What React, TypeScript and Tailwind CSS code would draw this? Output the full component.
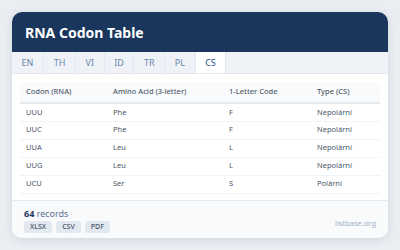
const tabs = ["EN", "TH", "VI", "ID", "TR", "PL", "CS"];

const rows = [
  { codon: "UUU", amino: "Phe", letter: "F", type: "Nepolární" },
  { codon: "UUC", amino: "Phe", letter: "F", type: "Nepolární" },
  { codon: "UUA", amino: "Leu", letter: "L", type: "Nepolární" },
  { codon: "UUG", amino: "Leu", letter: "L", type: "Nepolární" },
  { codon: "UCU", amino: "Ser", letter: "S", type: "Polární" },
];

export default function App() {
  return (
    <div
      className="h-[250px] w-[400px] bg-[#eaeef3] p-[12px]"
      style={{ fontFamily: '"Noto Sans", "Open Sans", sans-serif' }}
    >
      <div className="flex h-[226px] flex-col overflow-hidden rounded-[10px] bg-white shadow-[0_2px_8px_rgba(30,41,59,0.12)]">
        <div className="flex h-[40px] items-center bg-[#1b365d] px-[13px]">
          <h1 className="text-[14px] font-bold text-white">RNA Codon Table</h1>
        </div>

        <div className="flex h-[22px] border-b border-[#e2e8f0] bg-[#eff3f8]">
          {tabs.map((tab) => (
            <div
              key={tab}
              className={
                tab === "CS"
                  ? "flex items-center justify-center border-r border-[#e2e8f0] bg-white px-[9.6px] text-[9px] text-[#1e4e8c]"
                  : "flex items-center justify-center border-r border-[#e2e8f0] px-[9.6px] text-[9px] text-[#6b86a8]"
              }
            >
              {tab}
            </div>
          ))}
        </div>

        <div className="flex-1 px-[8px] pt-[8px]">
          <table className="w-full border-collapse text-left text-[7.5px] text-[#4a5568]">
            <thead>
              <tr className="h-[21px] border-b-2 border-[#e5eaf1] bg-[#f8fafc] text-[#555f6d]">
                <th className="w-[87px] pl-[6px] font-medium">Codon (RNA)</th>
                <th className="w-[116px] pl-[6px] font-medium">Amino Acid (3-letter)</th>
                <th className="w-[88px] pl-[6px] font-medium">1-Letter Code</th>
                <th className="pl-[6px] font-medium">Type (CS)</th>
              </tr>
            </thead>
            <tbody>
              {rows.map((r) => (
                <tr key={r.codon} className="h-[18px] border-b border-[#f0f3f7]">
                  <td className="pl-[6px]">{r.codon}</td>
                  <td className="pl-[6px]">{r.amino}</td>
                  <td className="pl-[6px]">{r.letter}</td>
                  <td className="pl-[6px]">{r.type}</td>
                </tr>
              ))}
            </tbody>
          </table>
        </div>

        <div className="flex h-[38px] items-end justify-between border-t border-[#e5eaf1] bg-[#f8fafc] px-[12px] pb-[5px]">
          <div>
            <div className="text-[9px] leading-[12px] text-[#5b7394]">
              <span className="font-bold text-[#1b365d]">64</span> records
            </div>
            <div className="mt-[1px] flex gap-[4px]">
              {["XLSX", "CSV", "PDF"].map((b) => (
                <span
                  key={b}
                  className="rounded-[3px] bg-[#e2e8f0] px-[6px] py-[2px] text-[7px] font-medium leading-[8px] text-[#4a5568]"
                >
                  {b}
                </span>
              ))}
            </div>
          </div>
          <span className="mb-[4px] text-[7.5px] text-[#a0aec0]">listbase.org</span>
        </div>
      </div>
    </div>
  );
}
